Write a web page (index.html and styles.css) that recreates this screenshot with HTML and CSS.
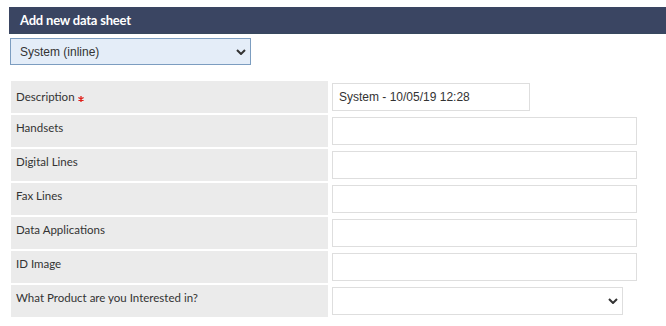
FILE: index.html
```html
<!DOCTYPE html>
<html lang="en">
<head>
  <meta charset="UTF-8" />
  <meta name="viewport" content="width=device-width, initial-scale=1" />
  <title>Add new data sheet</title>
  <link rel="stylesheet" href="styles.css">
</head>
<body>
  <div class="panel">
    <div class="panel-head">Add new data sheet</div>

    <div class="select-wrap type-select">
      <select class="select-type">
        <option>System (inline)</option>
      </select>
      <svg class="chevron" width="10" height="6" viewBox="0 0 10 6"><path d="M1 1 L5 5 L9 1" fill="none" stroke="#333" stroke-width="2"/></svg>
    </div>

    <table class="sheet">
      <tr class="req">
        <td class="label">Description <svg class="star" width="6" height="6" viewBox="0 0 6 6"><path d="M3 0 V6 M0.4 1.5 L5.6 4.5 M0.4 4.5 L5.6 1.5" stroke="#e0201b" stroke-width="1.3"/></svg></td>
        <td class="value"><input type="text" class="field short" value="System - 10/05/19 12:28"></td>
      </tr>
      <tr>
        <td class="label">Handsets</td>
        <td class="value"><input type="text" class="field"></td>
      </tr>
      <tr>
        <td class="label">Digital Lines</td>
        <td class="value"><input type="text" class="field"></td>
      </tr>
      <tr>
        <td class="label">Fax Lines</td>
        <td class="value"><input type="text" class="field"></td>
      </tr>
      <tr>
        <td class="label">Data Applications</td>
        <td class="value"><input type="text" class="field"></td>
      </tr>
      <tr>
        <td class="label">ID Image</td>
        <td class="value"><input type="text" class="field"></td>
      </tr>
      <tr>
        <td class="label">What Product are you Interested in?</td>
        <td class="value">
          <div class="select-wrap product-select">
            <select class="field select-field">
              <option></option>
            </select>
            <svg class="chevron" width="10" height="6" viewBox="0 0 10 6"><path d="M1 1 L5 5 L9 1" fill="none" stroke="#333" stroke-width="2"/></svg>
          </div>
        </td>
      </tr>
    </table>
  </div>
</body>
</html>
```

FILE: styles.css
```css
body {
  margin: 7px 0 0 9px;
  font-family: Lato, "Open Sans", sans-serif;
  color: #333;
  background: #fff;
}
.panel-head {
  height: 26px;
  line-height: 26px;
  padding-left: 11px;
  background: #3a4562;
  border-bottom: 1px solid #37485e;
  color: #fff;
  font-weight: bold;
  font-size: 13px;
  letter-spacing: -0.2px;
}
.select-wrap {
  position: relative;
  display: inline-block;
}
.type-select {
  margin: 4px 0 0 1px;
}
.select-type {
  -webkit-appearance: none;
  appearance: none;
  width: 241px;
  height: 27px;
  padding: 0 9px;
  background: #e4edf8;
  border: 1px solid #7c9dc0;
  border-radius: 0;
  font-family: "Liberation Sans", Arial, sans-serif;
  font-size: 12px;
  color: #333;
}
.chevron {
  position: absolute;
  top: 50%;
  right: 5px;
  margin-top: -3px;
  pointer-events: none;
}
.sheet {
  display: block;
  margin-top: 14px;
  border-spacing: 2px;
}
.sheet td {
  padding: 0;
}
.label {
  width: 317px;
  height: 32px;
  padding: 6px 0 0 5px !important;
  box-sizing: border-box;
  vertical-align: top;
  background: #ebebeb;
  font-size: 11.5px;
}
.req .label {
  padding-top: 9px !important;
}
.star {
  vertical-align: -1px;
}
.value {
  padding: 2px 0 2px 2px !important;
  vertical-align: top;
}
.field {
  display: block;
  box-sizing: border-box;
  width: 305px;
  height: 28px;
  margin: 0;
  padding: 0 6px;
  border: 1px solid #dedede;
  border-radius: 0;
  background: #fff;
  font-family: "Liberation Sans", Arial, sans-serif;
  font-size: 12px;
  color: #333;
  outline: none;
}
.short {
  width: 198px;
}
.select-field {
  -webkit-appearance: none;
  appearance: none;
  width: 291px;
}
.product-select {
  display: block;
  width: 291px;
}
```
